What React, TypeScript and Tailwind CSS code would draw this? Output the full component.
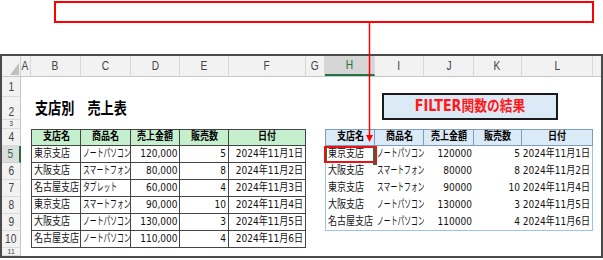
import React from "react";
import clsx from "clsx";

// A..L column widths (row header column is separate)
const W = [
    "w-[10px]", "w-[50px]", "w-[50px]", "w-[49px]", "w-[49px]", "w-[77px]",
    "w-[19px]", "w-[50px]", "w-[49px]", "w-[50px]", "w-[48px]", "w-[71px]",
];
const LETTERS = ["A", "B", "C", "D", "E", "F", "G", "H", "I", "J", "K", "L"];

const sales = [
    ["東京支店", "ノートパソコン", "120,000", "5", "2024年11月1日"],
    ["大阪支店", "スマートフォン", "80,000", "8", "2024年11月2日"],
    ["名古屋支店", "タブレット", "60,000", "4", "2024年11月3日"],
    ["東京支店", "スマートフォン", "90,000", "10", "2024年11月4日"],
    ["大阪支店", "ノートパソコン", "130,000", "3", "2024年11月5日"],
    ["名古屋支店", "ノートパソコン", "110,000", "4", "2024年11月6日"],
];

const filtered = [
    ["東京支店", "ノートパソコン", "120000", "5", "2024年11月1日"],
    ["大阪支店", "スマートフォン", "80000", "8", "2024年11月2日"],
    ["東京支店", "スマートフォン", "90000", "10", "2024年11月4日"],
    ["大阪支店", "ノートパソコン", "130000", "3", "2024年11月5日"],
    ["名古屋支店", "ノートパソコン", "110000", "4", "2024年11月6日"],
];

const headers = ["支店名", "商品名", "売上金額", "販売数", "日付"];
const aligns: Array<"left" | "right" | "center"> = ["left", "left", "right", "right", "right"];

type Align = "left" | "right" | "center";

function Cell({ w, className = "", align = "left", narrow, children }: {
    w: string; className?: string; align?: Align; narrow?: boolean; children?: React.ReactNode
}) {
    return (
        <div
            className={clsx(
                "flex h-full flex-none items-center overflow-hidden",
                w,
                align === "right" ? "justify-end pr-[2px]" : align === "center" ? "justify-center" : "justify-start pl-[2px]",
                className
            )}
        >
            {children != null && (
                <span
                    className={clsx(
                        "inline-block flex-none whitespace-nowrap",
                        narrow ? "scale-x-[0.62]" : "scale-x-[0.82]",
                        align === "right" ? "origin-right" : align === "center" ? "origin-center" : "origin-left"
                    )}
                >
                    {children}
                </span>
            )}
        </div>
    );
}

function SheetRow({ num, h, active, labelBottom, small, children }: {
    num: string; h: string; active?: boolean; labelBottom?: boolean; small?: boolean; children?: React.ReactNode
}) {
    return (
        <div className={clsx("flex", h)}>
            <div
                className={clsx(
                    "flex w-[19px] flex-none justify-center overflow-hidden border-b font-['Liberation_Sans',sans-serif]",
                    small ? "items-start text-[8px] leading-[8px]" : "text-[12px] leading-[14px]",
                    labelBottom ? "items-end" : small ? "" : "items-center",
                    active
                        ? "border-b-[#d0d0d0] border-r-2 border-r-[#217346] bg-[#dcdcdc] text-[#217346]"
                        : "border-b-[#dadada] border-r border-r-[#c6c6c6] bg-[#f2f2f2] text-[#444]"
                )}
            >
                <span className="inline-block scale-x-[0.85]">{num}</span>
            </div>
            {children}
            <div className="flex-1" />
        </div>
    );
}

function Empty({ w }: { w: string }) {
    return <div className={clsx("h-full flex-none", w)} />;
}

export default function App() {
    return (
        <div className="relative h-[260px] w-[603px] overflow-hidden bg-white font-['DejaVu_Sans','Noto_Sans_CJK_JP',sans-serif] text-[11px] text-[#111]">
            {/* annotation box */}
            <div className="h-[54px] pl-[54px] pt-[1px]">
                <div className="h-[22px] w-[540px] border-2 border-[#ff0000]" />
            </div>

            {/* sheet */}
            <div className="relative h-[204px] border-2 border-[#4a4a4a]">
                {/* column headers */}
                <div className="flex h-[21px] border-b border-[#c8c8c8] bg-[#f2f2f2] font-['Liberation_Sans',sans-serif] text-[12px] text-[#444]">
                    <div className="relative w-[19px] flex-none border-r border-[#d0d0d0]">
                        <svg className="absolute bottom-[1px] right-[1px]" width="9" height="12" viewBox="0 0 9 12">
                            <polygon points="9,0 9,12 0,12" fill="#c0c0c0" />
                        </svg>
                    </div>
                    {LETTERS.map((l, i) => (
                        <div
                            key={l}
                            className={clsx(
                                "flex flex-none items-center justify-center border-r border-[#d8d8d8]",
                                W[i],
                                l === "H" && "border-b-2 border-b-[#217346] bg-[#d6d6d6] text-[#217346]"
                            )}
                        >
                            <span className="inline-block scale-x-[0.85]">{l}</span>
                        </div>
                    ))}
                    <div className="flex-1" />
                </div>

                <SheetRow num="1" h="h-[20px]" />
                <SheetRow num="2" h="h-[23px]" labelBottom>
                    <Empty w={W[0]} />
                    <div className="flex h-full w-[50px] flex-none items-end pb-[2px] pl-[4px]">
                        <span className="inline-block origin-left scale-x-[0.82] whitespace-nowrap text-[16px] font-bold leading-[18px] text-black">
                            支店別　売上表
                        </span>
                    </div>
                </SheetRow>
                <SheetRow num="3" h="h-[9px]" small />

                {/* row 4: table headers */}
                <SheetRow num="4" h="h-[17px]">
                    <Empty w={W[0]} />
                    {headers.map((t, i) => (
                        <Cell
                            key={"m" + t}
                            w={W[i + 1]}
                            align="center"
                            className={clsx(
                                "border-b border-r border-t border-[#444] bg-[#c6efce] font-bold text-black",
                                i === 0 && "border-l"
                            )}
                        >
                            {t}
                        </Cell>
                    ))}
                    <Empty w={W[6]} />
                    {headers.map((t, i) => (
                        <Cell
                            key={"f" + t}
                            w={W[i + 7]}
                            align="center"
                            className={clsx(
                                "border-b border-r border-t border-[#7f9cbf] bg-[#dbeaf7] font-bold text-black",
                                i === 0 && "border-l"
                            )}
                        >
                            {t}
                        </Cell>
                    ))}
                </SheetRow>

                {sales.map((row, r) => (
                    <SheetRow key={r} num={String(r + 5)} h="h-[17px]" active={r === 0}>
                        <Empty w={W[0]} />
                        {row.map((v, i) => (
                            <Cell
                                key={i}
                                w={W[i + 1]}
                                align={aligns[i]}
                                narrow={i === 1}
                                className={clsx("border-b border-r border-[#444]", i === 0 && "border-l")}
                            >
                                {v}
                            </Cell>
                        ))}
                        <Empty w={W[6]} />
                        {r < filtered.length &&
                            filtered[r].map((v, i) => (
                                <div key={i} className={clsx("relative h-full flex-none", W[i + 7])}>
                                    <Cell
                                        w="w-full"
                                        align={aligns[i]}
                                        narrow={i === 1}
                                        className={clsx(
                                            "border-[#9dc3e6]",
                                            i === 0 && "border-l",
                                            i === 4 && "border-r",
                                            r === filtered.length - 1 && "border-b"
                                        )}
                                    >
                                        {v}
                                    </Cell>
                                    {r === 0 && i === 0 && (
                                        <>
                                            <div className="absolute inset-0 border-2 border-[#217346]" />
                                            <div className="absolute -bottom-[2px] -right-[2px] h-[4px] w-[4px] bg-[#217346]" />
                                            <div className="absolute -left-[1px] -right-[2px] bottom-0 top-0 border-2 border-[#ee1111]" />
                                        </>
                                    )}
                                </div>
                            ))}
                    </SheetRow>
                ))}
                <SheetRow num="11" h="h-[8px]" small />

                {/* floating text box */}
                <div className="absolute left-[380px] top-[37px] flex h-[27px] w-[176px] items-center justify-center border-2 border-[#1a1a1a] bg-[#dce9f6]">
                    <span className="inline-block scale-x-[0.85] whitespace-nowrap text-[15px] font-bold text-[#ff1a1a]">
                        FILTER関数の結果
                    </span>
                </div>
            </div>

            {/* pointer arrow */}
            <svg className="absolute left-[366px] top-[23px]" width="8" height="120" viewBox="0 0 8 120">
                <line x1="3.5" y1="0" x2="3.5" y2="113" stroke="#ff0000" strokeWidth="1.5" />
                <polygon points="0,112 7,112 3.5,119" fill="#ff0000" />
            </svg>
        </div>
    );
}
